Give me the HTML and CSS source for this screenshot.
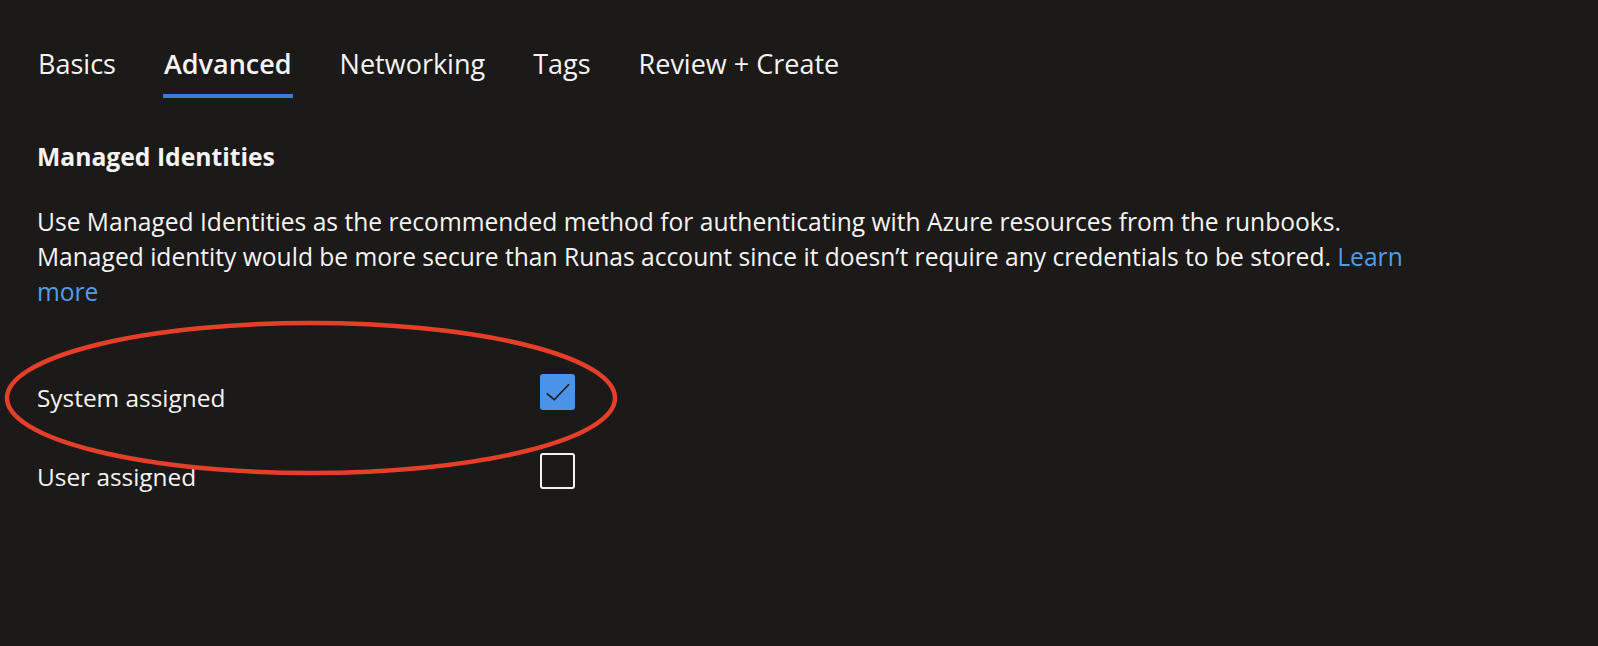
FILE: index.html
```html
<!DOCTYPE html>
<html lang="en">
<head>
<meta charset="utf-8">
<title>Advanced</title>
<link rel="stylesheet" href="styles.css">
</head>
<body>
<div class="page">
  <nav class="tabs">
    <span class="tab">Basics</span>
    <span class="tab active">Advanced</span>
    <span class="tab">Networking</span>
    <span class="tab">Tags</span>
    <span class="tab">Review + Create</span>
  </nav>

  <h2 class="heading">Managed Identities</h2>
  <p class="desc">Use Managed Identities as the recommended method for authenticating with Azure resources from the runbooks.<br>Managed identity would be more secure than Runas account since it doesn’t require any credentials to be stored. <a class="link" href="#">Learn<br>more</a></p>

  <div class="form">
    <div class="row">
      <span class="label">System assigned</span>
      <span class="check checked">
        <svg viewBox="0 0 35 36" width="35" height="36"><path d="M6.7 19.3 L14.3 25.7 L29 10.3" fill="none" stroke="#1b1a19" stroke-width="1.6"/></svg>
      </span>
    </div>
    <div class="row">
      <span class="label">User assigned</span>
      <span class="check"></span>
    </div>
    <svg class="annot" width="640" height="180" viewBox="0 0 640 180"><ellipse cx="311" cy="89" rx="304" ry="75" fill="none" stroke="#e63f29" stroke-width="4.5"/></svg>
  </div>
</div>
</body>
</html>
```

FILE: styles.css
```css
html, body {
  margin: 0;
  padding: 0;
  background: #1b1a19;
}
body {
  font-family: "Open Sans", "Noto Sans", sans-serif;
  color: #f5f4f3;
  width: 1598px;
  height: 646px;
  overflow: hidden;
}
.page {
  padding: 47px 0 0 37px;
}
.tabs {
  display: flex;
  gap: 46px;
}
.tab {
  font-size: 27px;
  line-height: 34px;
  padding: 0 1px 13px;
  border-bottom: 4px solid transparent;
}
.tab.active {
  font-weight: 600;
  border-bottom-color: #3a7bd5;
}
.heading {
  margin: 43px 0 0;
  font-size: 24.7px;
  line-height: 32px;
  font-weight: 700;
}
.desc {
  margin: 31px 0 0;
  font-size: 24.6px;
  line-height: 35px;
}
.link {
  color: #4f9de8;
  text-decoration: none;
}
.form {
  position: relative;
  margin-top: 65px;
  display: flex;
  flex-direction: column;
  gap: 43px;
}
.row {
  display: flex;
  align-items: flex-start;
  height: 36px;
}
.label {
  width: 503px;
  font-size: 24.4px;
  line-height: 36px;
  padding-top: 6px;
}
.check {
  box-sizing: border-box;
  width: 35px;
  height: 36px;
  border: 2px solid #f3f2f1;
  border-radius: 3px;
  display: block;
}
.check.checked {
  border: none;
  background: #4a93e8;
}
.check svg {
  display: block;
}
.annot {
  position: absolute;
  left: -37px;
  top: -65px;
  pointer-events: none;
}
```
